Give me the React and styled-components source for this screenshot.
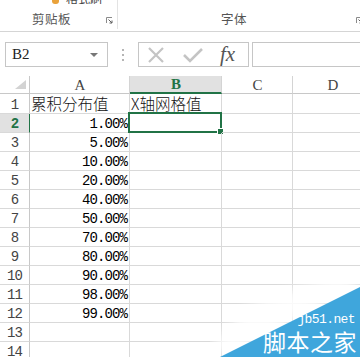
import React from "react";
import styled, { createGlobalStyle } from "styled-components";

const GlobalStyle = createGlobalStyle`
  html, body {
    margin: 0;
    padding: 0;
    background: #ffffff;
    overflow: hidden;
  }
  body {
    width: 360px;
    height: 357px;
    font-family: "Noto Sans CJK SC", "Liberation Sans", sans-serif;
  }
`;

const GREEN = "#217346";
const GRID = "#d9d9d9";

const Page = styled.div`
  position: relative;
  width: 360px;
  height: 357px;
  overflow: hidden;
  background: #fff;
`;

/* ---------- ribbon ---------- */
const Ribbon = styled.div`
  height: 31px;
  display: flex;
  border-bottom: 1px solid #d5d5d5;
  overflow: hidden;
`;

const Group = styled.div`
  width: ${(p) => p.$w}px;
  flex: none;
  display: flex;
  flex-direction: column;
  border-right: ${(p) => (p.$last ? "none" : "1px solid #e3e3e3")};
  height: 29px;
`;

const CutRow = styled.div`
  height: 4px;
  display: flex;
  align-items: flex-end;
  gap: 7px;
  padding-left: ${(p) => p.$pl}px;
  overflow: hidden;
  font-size: 12px;
  color: #444;
  line-height: 12px;
  span:last-child {
    margin-bottom: -1px;
  }
`;

const BrushIcon = styled.span`
  width: 7px;
  height: 4px;
  background: #e9a23b;
  border-radius: 0 0 3px 3px;
`;

const LabelRow = styled.div`
  flex: 1;
  display: flex;
  align-items: center;
  padding-left: ${(p) => p.$pl}px;
  padding-top: 4px;
`;

const GroupLabel = styled.span`
  font-size: 12.5px;
  color: #555;
  letter-spacing: 0.5px;
  width: ${(p) => p.$w}px;
`;

const Launcher = () => (
  <svg width="7" height="7" viewBox="0 0 7 7" style={{ marginTop: 4 }}>
    <path d="M0.5 6V0.5H6" stroke="#8a8a8a" fill="none" strokeWidth="1" />
    <path d="M2.5 2.5L6 6M6 3.5V6H3.5" stroke="#5f5f5f" fill="none" strokeWidth="1" />
  </svg>
);

/* ---------- formula bar ---------- */
const FormulaBar = styled.div`
  display: flex;
  align-items: center;
  padding: 10px 0 9px 5px;
  & > * {
    flex: none;
  }
`;

const NameBox = styled.div`
  width: 103px;
  height: 25px;
  box-sizing: border-box;
  border: 1px solid #c6c6c6;
  display: flex;
  align-items: center;
  justify-content: space-between;
  padding: 0 6px 0 6px;
  font-family: "Liberation Serif", serif;
  font-size: 15px;
  color: #222;
`;

const DropArrow = styled.span`
  width: 0;
  height: 0;
  border-left: 4px solid transparent;
  border-right: 4px solid transparent;
  border-top: 4px solid #777;
  margin-right: 3px;
`;

const Grip = styled.div`
  display: flex;
  flex-direction: column;
  gap: 3px;
  margin: 0 14px 0 14px;
  span {
    width: 2px;
    height: 2px;
    background: #b5b5b5;
  }
`;

const FxBox = styled.div`
  width: 111px;
  height: 25px;
  box-sizing: border-box;
  border: 1px solid #c6c6c6;
  display: flex;
  align-items: center;
  padding-left: 8px;
  gap: 18px;
`;

const Fx = styled.span`
  font-family: "Liberation Serif", serif;
  font-style: italic;
  font-size: 21px;
  color: #555;
  line-height: 1;
  margin-left: -1px;
`;

const FormulaInput = styled.div`
  margin-left: 3px;
  width: 140px;
  height: 25px;
  box-sizing: border-box;
  border: 1px solid #c6c6c6;
`;

/* ---------- sheet ---------- */
const Sheet = styled.div`
  display: grid;
  grid-template-columns: 30px 100px 92px 71px 80px;
  grid-template-rows: 18px 20px repeat(13, 19px);
`;

const Cell = styled.div`
  box-sizing: border-box;
  border-right: 1px solid ${GRID};
  border-bottom: 1px solid ${GRID};
  display: flex;
  align-items: center;
  justify-content: ${(p) => (p.$align === "right" ? "flex-end" : p.$align === "center" ? "center" : "flex-start")};
  padding: ${(p) => (p.$align === "right" ? "0 2px 0 0" : "0 0 0 1px")};
  font-size: 14px;
  color: #000;
  white-space: nowrap;
  position: relative;
`;

const NumText = styled.span`
  font-family: "Liberation Mono", monospace;
  font-size: 14px;
  letter-spacing: -0.9px;
  padding-top: 2px;
`;

const CjkText = styled.span`
  font-family: "Noto Sans CJK SC", sans-serif;
  font-size: 15.5px;
  font-weight: 300;
  line-height: 1;
  padding-top: 1px;
  color: #111;
`;

const ColHead = styled(Cell)`
  justify-content: center;
  font-family: "Liberation Serif", serif;
  font-size: 15px;
  color: ${(p) => (p.$sel ? GREEN : "#444")};
  font-weight: ${(p) => (p.$sel ? 700 : 400)};
  background: ${(p) => (p.$sel ? "#e1e1e1" : "#fff")};
  border-bottom: ${(p) => (p.$sel ? `2px solid ${GREEN}` : "1px solid #c8c8c8")};
  border-right-color: #d4d4d4;
  padding-top: 1px;
`;

const RowHead = styled(Cell)`
  justify-content: center;
  padding: 0;
  background: ${(p) => (p.$sel ? "#e1e1e1" : "#fff")};
  color: ${(p) => (p.$sel ? GREEN : "#444")};
  border-right: 1px solid ${(p) => (p.$sel ? GREEN : "#c8c8c8")};
  span {
    font-family: "Liberation Mono", monospace;
    font-size: 14px;
    letter-spacing: -0.9px;
    font-weight: ${(p) => (p.$sel ? 700 : 400)};
    padding-top: 2px;
  }
`;

const Corner = styled(Cell)`
  border-right-color: #c8c8c8;
  border-bottom-color: #c8c8c8;
  justify-content: flex-end;
  align-items: flex-end;
  padding: 0 3px 4px 0;
`;

const Selection = styled.div`
  position: absolute;
  left: -2px;
  top: -2px;
  right: -1px;
  bottom: -1px;
  border: 2px solid ${GREEN};
  pointer-events: none;
  &::after {
    content: "";
    position: absolute;
    right: -4px;
    bottom: -4px;
    width: 5px;
    height: 5px;
    background: ${GREEN};
    border: 1px solid #fff;
  }
`;

/* ---------- watermark ---------- */
const Watermark = styled.div`
  position: absolute;
  right: 0;
  bottom: 0;
  width: 150px;
  height: 80px;
  pointer-events: none;
`;

const WmText = styled.div`
  position: absolute;
  right: 3px;
  bottom: 4px;
  display: flex;
  flex-direction: column;
  align-items: flex-end;
  color: #fff;
  line-height: 1;
`;

const WmUrl = styled.span`
  font-family: "Liberation Mono", monospace;
  font-size: 13px;
  letter-spacing: -0.6px;
  margin-right: 2px;
  margin-bottom: 4px;
`;

const WmName = styled.span`
  font-family: "Noto Sans CJK SC", sans-serif;
  font-size: 23px;
  letter-spacing: 0.5px;
`;

const values = ["1.00%", "5.00%", "10.00%", "20.00%", "40.00%", "50.00%", "70.00%", "80.00%", "90.00%", "98.00%", "99.00%"];

export default function App() {
  const rows = [];
  for (let r = 1; r <= 14; r++) {
    const sel = r === 2;
    let aContent = null;
    let bContent = null;
    if (r === 1) {
      aContent = <CjkText>累积分布值</CjkText>;
      bContent = <CjkText>X轴网格值</CjkText>;
    } else if (r <= 12) {
      aContent = <NumText>{values[r - 2]}</NumText>;
    }
    rows.push(
      <React.Fragment key={r}>
        <RowHead $sel={sel}>
          <span>{r}</span>
        </RowHead>
        <Cell $align={r === 1 ? "left" : "right"}>{aContent}</Cell>
        <Cell>
          {bContent}
          {sel && <Selection />}
        </Cell>
        <Cell />
        <Cell />
      </React.Fragment>
    );
  }

  return (
    <Page>
      <GlobalStyle />
      <Ribbon>
        <Group $w={117}>
          <CutRow $pl={52}>
            <BrushIcon />
            <span>格式刷</span>
          </CutRow>
          <LabelRow $pl={32}>
            <GroupLabel $w={74}>剪贴板</GroupLabel>
            <Launcher />
          </LabelRow>
        </Group>
        <Group $w={260} $last>
          <CutRow $pl={0} />
          <LabelRow $pl={103}>
            <GroupLabel $w={135}>字体</GroupLabel>
            <Launcher />
          </LabelRow>
        </Group>
      </Ribbon>

      <FormulaBar>
        <NameBox>
          <span>B2</span>
          <DropArrow />
        </NameBox>
        <Grip>
          <span />
          <span />
          <span />
        </Grip>
        <FxBox>
          <svg width="18" height="18" viewBox="0 0 18 18">
            <path d="M2 2L16 16M16 2L2 16" stroke="#c4c4c4" strokeWidth="2.2" />
          </svg>
          <svg width="20" height="18" viewBox="0 0 20 18">
            <path d="M1 9L7 15L19 3" stroke="#c4c4c4" strokeWidth="2.6" fill="none" />
          </svg>
          <Fx>fx</Fx>
        </FxBox>
        <FormulaInput />
      </FormulaBar>

      <Sheet>
        <Corner>
          <svg width="11" height="9" viewBox="0 0 11 9">
            <polygon points="11,0 11,9 0,9" fill="#d3d3d3" />
          </svg>
        </Corner>
        <ColHead>A</ColHead>
        <ColHead $sel>B</ColHead>
        <ColHead>C</ColHead>
        <ColHead>D</ColHead>
        {rows}
      </Sheet>

      <Watermark>
        <svg width="150" height="80" viewBox="0 0 150 80" style={{ position: "absolute", inset: 0 }}>
          <defs>
            <filter id="soft" x="-30%" y="-30%" width="160%" height="160%">
              <feGaussianBlur stdDeviation="6" />
            </filter>
          </defs>
          <polygon points="20,80 150,6 150,-10 40,28 0,70" fill="#fff" opacity="0.85" filter="url(#soft)" />
          <polygon points="10,80 150,10 150,80" fill="#3fa6dc" />
        </svg>
        <WmText>
          <WmUrl>jb51.net</WmUrl>
          <WmName>脚本之家</WmName>
        </WmText>
      </Watermark>
    </Page>
  );
}
